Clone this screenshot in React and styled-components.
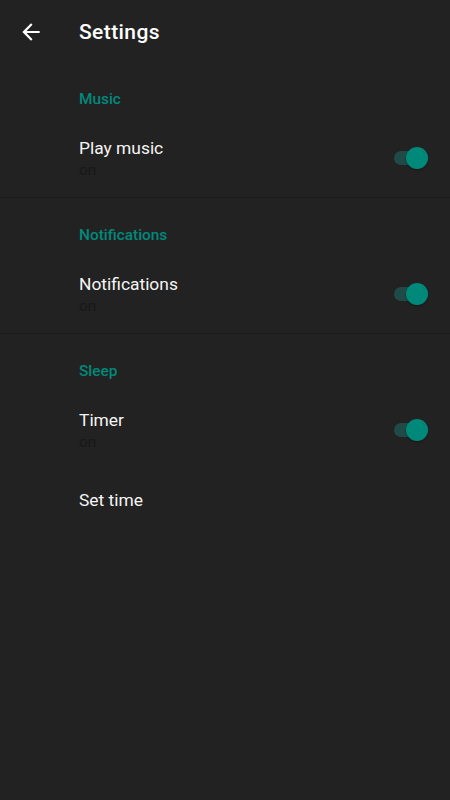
import React, { useState } from "react";
import styled, { createGlobalStyle } from "styled-components";

const Global = createGlobalStyle`
  html, body {
    margin: 0;
    padding: 0;
    background: #222222;
  }
  body {
    font-family: Roboto, "Liberation Sans", sans-serif;
    -webkit-font-smoothing: antialiased;
  }
`;

const Screen = styled.div`
  width: 450px;
  min-height: 800px;
  background: #222222;
  display: flex;
  flex-direction: column;
`;

const Toolbar = styled.div`
  height: 64px;
  display: flex;
  align-items: center;
`;

const BackButton = styled.button`
  width: 62px;
  height: 64px;
  padding: 0 0 0 18px;
  border: none;
  background: none;
  display: flex;
  align-items: center;
  cursor: pointer;
  outline: 0;
`;

const Title = styled.h1`
  margin: 0 0 0 17px;
  font-size: 21px;
  font-weight: 500;
  letter-spacing: 0.4px;
  color: #ffffff;
  line-height: 64px;
`;

const Section = styled.div`
  display: flex;
  flex-direction: column;
  border-top: ${(p) => (p.$divider ? "1px solid #1b1b1b" : "none")};
`;

const Category = styled.div`
  padding: ${(p) => (p.$first ? "25px" : "27px")} 22px 0 79px;
  font-size: 15.4px;
  font-weight: 500;
  line-height: 20px;
  color: #00897b;
`;

const Row = styled.div`
  display: flex;
  align-items: center;
  justify-content: space-between;
  padding: ${(p) => (p.$tight ? "19px" : "27px")} 22px 17px 79px;
  cursor: pointer;
`;

const Texts = styled.div`
  display: flex;
  flex-direction: column;
`;

const RowTitle = styled.span`
  font-size: 17.4px;
  line-height: 24px;
  color: #f5f5f5;
`;

const Summary = styled.span`
  font-size: 15.4px;
  line-height: 20px;
  color: #181818;
`;

const Track = styled.div`
  position: relative;
  width: 34px;
  height: 14px;
  border-radius: 7px;
  background: ${(p) => (p.$on ? "#1f4b46" : "#3a3a3a")};
`;

const Thumb = styled.div`
  position: absolute;
  top: -4px;
  left: ${(p) => (p.$on ? "12px" : "0px")};
  width: 22px;
  height: 22px;
  border-radius: 50%;
  background: ${(p) => (p.$on ? "#00897b" : "#bdbdbd")};
  box-shadow: 0 1px 2px rgba(0, 0, 0, 0.35);
`;

const Toggle = ({ on }) => (
  <Track $on={on}>
    <Thumb $on={on} />
  </Track>
);

const BackArrow = () => (
  <svg width="26" height="26" viewBox="0 0 24 24">
    <path
      fill="#ffffff"
      d="M20 11H7.83l5.59-5.59L12 4l-8 8 8 8 1.41-1.41L7.83 13H20v-2z"
    />
  </svg>
);

const SwitchRow = ({ title, on, onToggle }) => (
  <Row onClick={onToggle}>
    <Texts>
      <RowTitle>{title}</RowTitle>
      <Summary>{on ? "on" : "off"}</Summary>
    </Texts>
    <Toggle on={on} />
  </Row>
);

export default function App() {
  const [music, setMusic] = useState(true);
  const [notif, setNotif] = useState(true);
  const [timer, setTimer] = useState(true);

  return (
    <Screen>
      <Global />
      <Toolbar>
        <BackButton>
          <BackArrow />
        </BackButton>
        <Title>Settings</Title>
      </Toolbar>

      <Section>
        <Category $first>Music</Category>
        <SwitchRow title="Play music" on={music} onToggle={() => setMusic(!music)} />
      </Section>

      <Section $divider>
        <Category>Notifications</Category>
        <SwitchRow title="Notifications" on={notif} onToggle={() => setNotif(!notif)} />
      </Section>

      <Section $divider>
        <Category>Sleep</Category>
        <SwitchRow title="Timer" on={timer} onToggle={() => setTimer(!timer)} />
        <Row $tight>
          <RowTitle>Set time</RowTitle>
        </Row>
      </Section>
    </Screen>
  );
}
